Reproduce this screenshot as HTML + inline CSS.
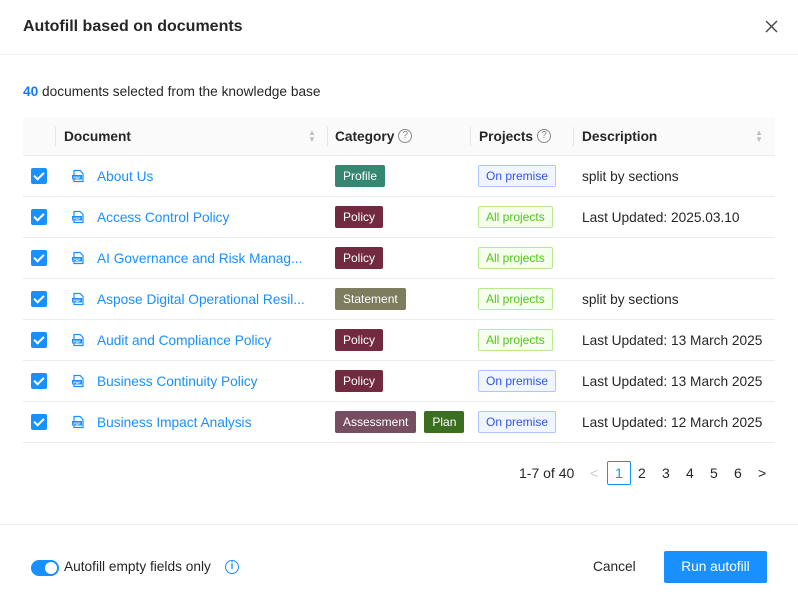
<!DOCTYPE html>
<html><head><meta charset="utf-8"><style>
*{box-sizing:border-box;margin:0;padding:0}
body{width:798px;height:609px;background:#fff;font-family:"Liberation Sans",sans-serif;font-size:13.7px;color:#262626;position:relative;overflow:hidden}
.abs{position:absolute}
.title{left:23px;top:18px;font-size:16px;font-weight:bold;color:#262626}
.hl{left:0;top:54px;width:798px;height:1px;background:#eee}
.table{left:23px;top:117px;width:752px}
.row{position:relative;height:41px;border-bottom:1px solid #ececec}
.head{height:39px;background:#fafafa;border-bottom:1px solid #ececec;font-weight:bold}
.c{position:absolute;top:0;height:100%;display:flex;align-items:center}
.sep{position:absolute;top:10px;width:1px;height:19px;background:#e6e6e6}
.cb{width:16px;height:16px;background:#1890ff;border-radius:2px;position:relative}
.cb:after{content:"";position:absolute;left:5px;top:2px;width:4px;height:8px;border:solid #fff;border-width:0 2px 2px 0;transform:rotate(45deg)}
.link{color:#1890ff}
.tag{color:#fff;font-size:12px;padding:0 8px;height:22px;line-height:22px;border-radius:2px;margin-right:8px}
.pt{font-size:12px;padding:0 7px;height:22px;line-height:20px;border-radius:2px;border:1px solid}
.on{color:#2f54eb;background:#f0f5ff;border-color:#adc6ff}
.all{color:#52c41a;background:#f6ffed;border-color:#b7eb8f}
.q{display:inline-block;width:14px;height:14px;border:1px solid #8c8c8c;border-radius:50%;font-size:10px;line-height:12px;text-align:center;color:#8c8c8c;font-weight:normal;margin-left:4px}
.pg{top:461px;height:24px;display:flex;align-items:center;font-size:14px}
</style></head><body>
<svg width="0" height="0" style="position:absolute"><defs><symbol id="pdf" viewBox="0 0 14 14"><path d="M3 1.5h6l3 3v8H3z" fill="none" stroke="#1890ff" stroke-width="1.2"/><rect x="1" y="6" width="10" height="4.5" fill="#1890ff"/><text x="6" y="9.8" font-size="3.6" fill="#fff" text-anchor="middle" font-family="Liberation Sans" font-weight="bold">PDF</text></symbol></defs></svg>
<div class="abs title">Autofill based on documents</div>
<svg class="abs" style="left:765px;top:20px" width="13" height="13" viewBox="0 0 13 13"><path d="M1 1L12 12M12 1L1 12" stroke="#444" stroke-width="1.4"/></svg>
<div class="abs hl"></div>
<div class="abs" style="left:23px;top:84px"><b style="color:#1677ff">40</b> documents selected from the knowledge base</div>
<div class="abs table">
<div class="row head">
<div class="sep" style="left:32px"></div>
<div class="c" style="left:41px">Document</div>
<div class="c" style="left:285px;color:#bfbfbf;font-size:8px;line-height:7px;flex-direction:column;justify-content:center">▲<br>▼</div>
<div class="sep" style="left:304px"></div>
<div class="c" style="left:312px">Category<span class="q">?</span></div>
<div class="sep" style="left:447px"></div>
<div class="c" style="left:456px">Projects<span class="q">?</span></div>
<div class="sep" style="left:550px"></div>
<div class="c" style="left:559px">Description</div>
<div class="c" style="left:732px;color:#bfbfbf;font-size:8px;line-height:7px;flex-direction:column;justify-content:center">▲<br>▼</div>
</div>
<div class="row"><div class="c" style="left:8px"><div class="cb"></div></div><div class="c" style="left:48px"><svg width="14" height="14"><use href="#pdf"/></svg></div><div class="c link" style="left:74px">About Us</div><div class="c" style="left:312px"><span class="tag" style="background:#358672">Profile</span></div><div class="c" style="left:455px"><span class="pt on">On premise</span></div><div class="c" style="left:559px">split by sections</div></div>
<div class="row"><div class="c" style="left:8px"><div class="cb"></div></div><div class="c" style="left:48px"><svg width="14" height="14"><use href="#pdf"/></svg></div><div class="c link" style="left:74px">Access Control Policy</div><div class="c" style="left:312px"><span class="tag" style="background:#722a40">Policy</span></div><div class="c" style="left:455px"><span class="pt all">All projects</span></div><div class="c" style="left:559px">Last Updated: 2025.03.10</div></div>
<div class="row"><div class="c" style="left:8px"><div class="cb"></div></div><div class="c" style="left:48px"><svg width="14" height="14"><use href="#pdf"/></svg></div><div class="c link" style="left:74px">AI Governance and Risk Manag...</div><div class="c" style="left:312px"><span class="tag" style="background:#722a40">Policy</span></div><div class="c" style="left:455px"><span class="pt all">All projects</span></div></div>
<div class="row"><div class="c" style="left:8px"><div class="cb"></div></div><div class="c" style="left:48px"><svg width="14" height="14"><use href="#pdf"/></svg></div><div class="c link" style="left:74px">Aspose Digital Operational Resil...</div><div class="c" style="left:312px"><span class="tag" style="background:#7d7c5f">Statement</span></div><div class="c" style="left:455px"><span class="pt all">All projects</span></div><div class="c" style="left:559px">split by sections</div></div>
<div class="row"><div class="c" style="left:8px"><div class="cb"></div></div><div class="c" style="left:48px"><svg width="14" height="14"><use href="#pdf"/></svg></div><div class="c link" style="left:74px">Audit and Compliance Policy</div><div class="c" style="left:312px"><span class="tag" style="background:#722a40">Policy</span></div><div class="c" style="left:455px"><span class="pt all">All projects</span></div><div class="c" style="left:559px">Last Updated: 13 March 2025</div></div>
<div class="row"><div class="c" style="left:8px"><div class="cb"></div></div><div class="c" style="left:48px"><svg width="14" height="14"><use href="#pdf"/></svg></div><div class="c link" style="left:74px">Business Continuity Policy</div><div class="c" style="left:312px"><span class="tag" style="background:#722a40">Policy</span></div><div class="c" style="left:455px"><span class="pt on">On premise</span></div><div class="c" style="left:559px">Last Updated: 13 March 2025</div></div>
<div class="row"><div class="c" style="left:8px"><div class="cb"></div></div><div class="c" style="left:48px"><svg width="14" height="14"><use href="#pdf"/></svg></div><div class="c link" style="left:74px">Business Impact Analysis</div><div class="c" style="left:312px"><span class="tag" style="background:#774d62">Assessment</span><span class="tag" style="background:#3c6e1f">Plan</span></div><div class="c" style="left:455px"><span class="pt on">On premise</span></div><div class="c" style="left:559px">Last Updated: 12 March 2025</div></div>
</div>
<div class="abs pg" style="left:519px">1-7 of 40</div>
<div class="abs pg" style="left:590px;color:#ccc">&lt;</div>
<div class="abs pg" style="left:607px;width:24px;border:1px solid #1890ff;border-radius:2px;justify-content:center;color:#1890ff">1</div>
<div class="abs pg" style="left:638px">2</div>
<div class="abs pg" style="left:662px">3</div>
<div class="abs pg" style="left:686px">4</div>
<div class="abs pg" style="left:710px">5</div>
<div class="abs pg" style="left:734px">6</div>
<div class="abs pg" style="left:758px">&gt;</div>
<div class="abs" style="left:0;top:524px;width:798px;height:1px;background:#eee"></div>
<div class="abs" style="left:31px;top:560px;width:28px;height:16px;border-radius:8px;background:#1890ff"><div style="position:absolute;right:2px;top:2px;width:12px;height:12px;border-radius:50%;background:#fff"></div></div>
<div class="abs" style="left:64px;top:559px">Autofill empty fields only</div>
<div class="abs" style="left:225px;top:560px;width:14px;height:14px;border:1px solid #1890ff;border-radius:50%;color:#1890ff;font-size:10px;line-height:12px;text-align:center;font-weight:bold">i</div>
<div class="abs" style="left:593px;top:559px">Cancel</div>
<div class="abs" style="left:664px;top:551px;width:103px;height:32px;background:#1890ff;border-radius:2px;color:#fff;text-align:center;line-height:32px">Run autofill</div>
</body></html>
